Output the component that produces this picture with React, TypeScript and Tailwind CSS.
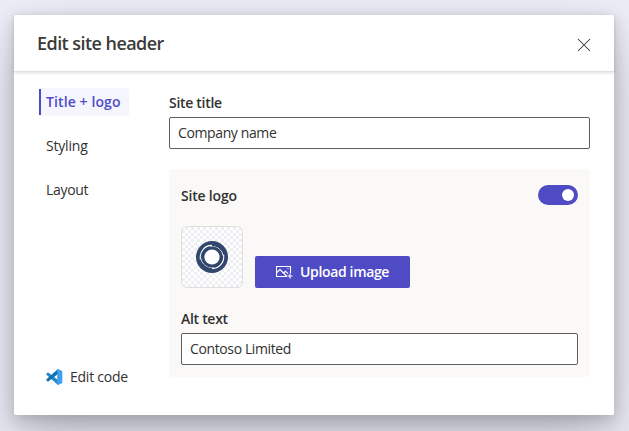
import React from "react";

function CloseIcon() {
  return (
    <svg width="14" height="14" viewBox="0 0 14 14" fill="none" stroke="#3b3a39" strokeWidth="1.05">
      <path d="M1 1L13 13M13 1L1 13" />
    </svg>
  );
}

function CodeLogo() {
  return (
    <svg width="17" height="16" viewBox="0 0 17 16">
      <path d="M0.3 4.7L2 3.3L12 11V16L0.5 5.8Z" fill="#2489ca" />
      <path d="M0.3 11.3L2 12.7L12 5V0L0.5 10.2Z" fill="#1070b3" />
      <path d="M12 0L16.3 2V14L12 16L11.2 15.3V0.7Z" fill="#3c9ff0" />
    </svg>
  );
}

function ContosoMark() {
  return (
    <svg width="32" height="32" viewBox="0 0 32 32">
      <circle cx="16" cy="16" r="16" fill="#30466d" />
      <g fill="none" stroke="#fff" strokeLinecap="round">
        <path d="M4.3 18C3.6 10 9 4.6 15.5 4.4" strokeWidth="1.1" />
        <path d="M14.5 5.6C20.5 4.8 26.2 8.6 27 14.5" strokeWidth="1" />
        <path d="M27.7 14C28.4 22 23 27.4 16.5 27.6" strokeWidth="1.1" />
        <path d="M17.5 26.4C11.5 27.2 5.8 23.4 5 17.5" strokeWidth="1" />
      </g>
      <circle cx="16" cy="16" r="10.6" fill="#30466d" />
      <circle cx="16" cy="16" r="7.6" fill="#fff" />
    </svg>
  );
}

function ImageAddIcon() {
  return (
    <svg width="17" height="14" viewBox="0 0 17 14" fill="none" stroke="#fff" strokeWidth="1.15">
      <path d="M10.5 11.5H0.5V1.5H14.5V8" />
      <path d="M0.8 7.5L4 4.5L11 11.5M7.5 8L9.5 6.2L12 8.7" />
      <path d="M11.5 3.5H12.5M14 8.5V13.5M11.5 11H16.5" />
    </svg>
  );
}

function TextInput({ value }: { value: string }) {
  return (
    <input
      readOnly
      value={value}
      className="block h-8 w-full rounded-[2px] border border-[#605e5c] bg-white px-2 pb-px text-sm tracking-[-0.38px] text-[#323130] outline-none"
    />
  );
}

export default function App() {
  return (
    <div className="h-[431px] w-[629px] overflow-hidden bg-[#ededf8] pl-[14px] pt-[15px] font-['Open_Sans','Noto_Sans',sans-serif] text-sm text-[#323130]">
      <div className="flex h-[400px] w-[600px] flex-col rounded-[2px] bg-white shadow-[0_25.6px_57.6px_rgba(0,0,0,0.22),0_4.8px_14.4px_rgba(0,0,0,0.18)]">
        <header className="flex h-[57px] shrink-0 items-center justify-between border-b border-[#e1e1e1] pl-[23px] pr-[23.5px] shadow-[0_1px_3px_rgba(0,0,0,0.13)]">
          <h1 className="text-[18px] font-semibold leading-6 tracking-[-0.55px] text-[#3b3a39]">Edit site header</h1>
          <button className="mt-[3px]" aria-label="Close"><CloseIcon /></button>
        </header>
        <div className="flex min-h-0 flex-1 gap-10 pb-[23px] pl-[25px] pr-6 pt-4">
          <nav className="flex w-[90px] shrink-0 flex-col">
            <button className="flex h-7 items-center rounded-[2px] bg-[#f5f6fd]">
              <span className="h-[26px] w-[2px] bg-[#4f4bc4]" />
              <span className="whitespace-nowrap pl-[5px] font-semibold tracking-[0.1px] text-[#4f4bc4]">Title + logo</span>
            </button>
            <button className="mt-4 h-7 pl-[7px] text-left tracking-[-0.2px]">Styling</button>
            <button className="mt-4 h-7 pl-[7px] text-left tracking-[-0.3px]">Layout</button>
            <button className="mt-auto flex h-[30px] items-center gap-[7px] whitespace-nowrap pl-[7px] tracking-[-0.25px]">
              <CodeLogo />
              <span>Edit code</span>
            </button>
          </nav>
          <main className="flex w-[421px] flex-col">
            <label className="flex h-[29px] items-center pt-px font-semibold tracking-[-0.3px]">Site title</label>
            <TextInput value="Company name" />
            <section className="mt-5 h-[208px] rounded bg-[#faf9f8] px-3 pt-4">
              <div className="flex h-5 items-center justify-between">
                <span className="pt-[2px] font-semibold tracking-[-0.2px]">Site logo</span>
                <button role="switch" aria-checked="true" aria-label="Site logo" className="flex h-5 w-10 items-center justify-end rounded-full bg-[#4f4bc4] pr-1">
                  <span className="size-3 rounded-full bg-white" />
                </button>
              </div>
              <div className="mt-[21px] flex items-end gap-3">
                <div className="flex size-[62px] items-center justify-center rounded-md border border-[#e1dfdd] bg-white bg-[conic-gradient(#eeeff2_25%,#fff_0_50%,#eeeff2_0_75%,#fff_0)] bg-[length:6px_6px]">
                  <ContosoMark />
                </div>
                <button className="flex h-8 w-[155px] items-center rounded-[2px] bg-[#4f4bc4] pl-[21px] text-white">
                  <ImageAddIcon />
                  <span className="whitespace-nowrap pl-[7px] font-semibold tracking-[-0.35px]">Upload image</span>
                </button>
              </div>
              <label className="mt-[17px] flex h-7 items-center font-semibold tracking-[-0.3px]">Alt text</label>
              <TextInput value="Contoso Limited" />
            </section>
          </main>
        </div>
      </div>
    </div>
  );
}
